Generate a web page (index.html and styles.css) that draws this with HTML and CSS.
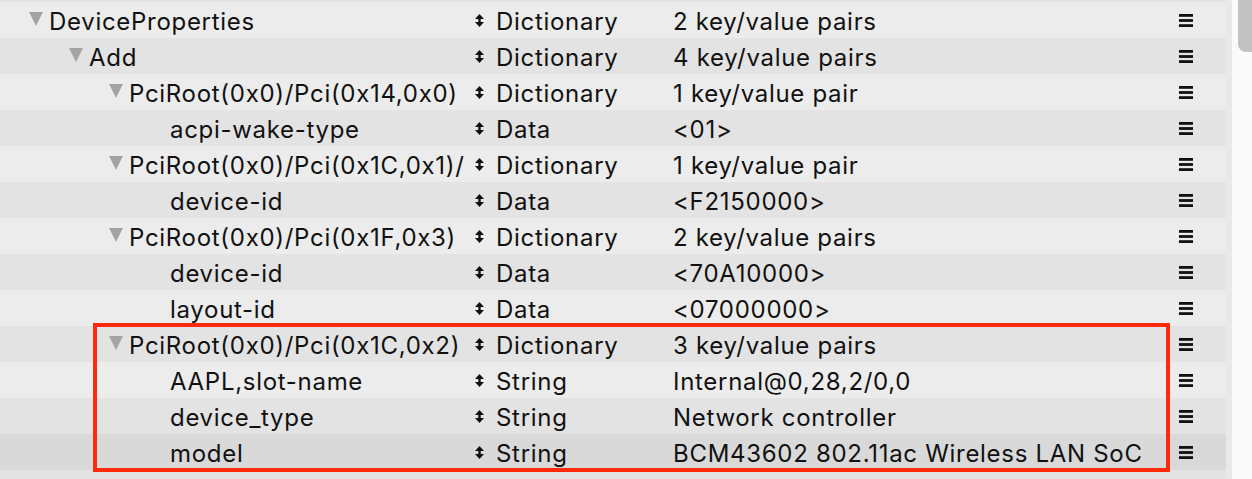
FILE: index.html
```html
<!DOCTYPE html>
<html lang="en">
<head>
<meta charset="utf-8">
<title>DeviceProperties</title>
<link rel="stylesheet" href="styles.css">
</head>
<body>
<div class="window">
  <div class="outline">
    <div class="rows">
      <div class="row dark"><div class="key l0"><span class="tri"></span><span class="txt">Booter</span></div><div class="type"><svg class="updown" viewBox="0 0 9 13"><path d="M4.5 0 L9 5 H5.7 V8 H9 L4.5 13 L0 8 H3.3 V5 H0 Z"/></svg><span>Dictionary</span></div><div class="value">3 key/value pairs</div><div class="menu"><svg class="burger" viewBox="0 0 14 13"><rect y="0" width="14" height="2.8"/><rect y="5.1" width="14" height="2.8"/><rect y="10.2" width="14" height="2.8"/></svg></div></div>

      <div class="row light"><div class="key l0"><span class="tri"></span><span class="txt">DeviceProperties</span></div><div class="type"><svg class="updown" viewBox="0 0 9 13"><path d="M4.5 0 L9 5 H5.7 V8 H9 L4.5 13 L0 8 H3.3 V5 H0 Z"/></svg><span>Dictionary</span></div><div class="value">2 key/value pairs</div><div class="menu"><svg class="burger" viewBox="0 0 14 13"><rect y="0" width="14" height="2.8"/><rect y="5.1" width="14" height="2.8"/><rect y="10.2" width="14" height="2.8"/></svg></div></div>

      <div class="row dark"><div class="key l1"><span class="tri"></span><span class="txt">Add</span></div><div class="type"><svg class="updown" viewBox="0 0 9 13"><path d="M4.5 0 L9 5 H5.7 V8 H9 L4.5 13 L0 8 H3.3 V5 H0 Z"/></svg><span>Dictionary</span></div><div class="value">4 key/value pairs</div><div class="menu"><svg class="burger" viewBox="0 0 14 13"><rect y="0" width="14" height="2.8"/><rect y="5.1" width="14" height="2.8"/><rect y="10.2" width="14" height="2.8"/></svg></div></div>

      <div class="row light"><div class="key l2"><span class="tri"></span><span class="txt">PciRoot(0x0)/Pci(0x14,0x0)</span></div><div class="type"><svg class="updown" viewBox="0 0 9 13"><path d="M4.5 0 L9 5 H5.7 V8 H9 L4.5 13 L0 8 H3.3 V5 H0 Z"/></svg><span>Dictionary</span></div><div class="value">1 key/value pair</div><div class="menu"><svg class="burger" viewBox="0 0 14 13"><rect y="0" width="14" height="2.8"/><rect y="5.1" width="14" height="2.8"/><rect y="10.2" width="14" height="2.8"/></svg></div></div>

      <div class="row dark"><div class="key l3"><span class="txt">acpi-wake-type</span></div><div class="type"><svg class="updown" viewBox="0 0 9 13"><path d="M4.5 0 L9 5 H5.7 V8 H9 L4.5 13 L0 8 H3.3 V5 H0 Z"/></svg><span>Data</span></div><div class="value">&lt;01&gt;</div><div class="menu"><svg class="burger" viewBox="0 0 14 13"><rect y="0" width="14" height="2.8"/><rect y="5.1" width="14" height="2.8"/><rect y="10.2" width="14" height="2.8"/></svg></div></div>

      <div class="row light"><div class="key l2"><span class="tri"></span><span class="txt">PciRoot(0x0)/Pci(0x1C,0x1)/Pci(0x0,0x0)</span></div><div class="type"><svg class="updown" viewBox="0 0 9 13"><path d="M4.5 0 L9 5 H5.7 V8 H9 L4.5 13 L0 8 H3.3 V5 H0 Z"/></svg><span>Dictionary</span></div><div class="value">1 key/value pair</div><div class="menu"><svg class="burger" viewBox="0 0 14 13"><rect y="0" width="14" height="2.8"/><rect y="5.1" width="14" height="2.8"/><rect y="10.2" width="14" height="2.8"/></svg></div></div>

      <div class="row dark"><div class="key l3"><span class="txt">device-id</span></div><div class="type"><svg class="updown" viewBox="0 0 9 13"><path d="M4.5 0 L9 5 H5.7 V8 H9 L4.5 13 L0 8 H3.3 V5 H0 Z"/></svg><span>Data</span></div><div class="value">&lt;F2150000&gt;</div><div class="menu"><svg class="burger" viewBox="0 0 14 13"><rect y="0" width="14" height="2.8"/><rect y="5.1" width="14" height="2.8"/><rect y="10.2" width="14" height="2.8"/></svg></div></div>

      <div class="row light"><div class="key l2"><span class="tri"></span><span class="txt">PciRoot(0x0)/Pci(0x1F,0x3)</span></div><div class="type"><svg class="updown" viewBox="0 0 9 13"><path d="M4.5 0 L9 5 H5.7 V8 H9 L4.5 13 L0 8 H3.3 V5 H0 Z"/></svg><span>Dictionary</span></div><div class="value">2 key/value pairs</div><div class="menu"><svg class="burger" viewBox="0 0 14 13"><rect y="0" width="14" height="2.8"/><rect y="5.1" width="14" height="2.8"/><rect y="10.2" width="14" height="2.8"/></svg></div></div>

      <div class="row dark"><div class="key l3"><span class="txt">device-id</span></div><div class="type"><svg class="updown" viewBox="0 0 9 13"><path d="M4.5 0 L9 5 H5.7 V8 H9 L4.5 13 L0 8 H3.3 V5 H0 Z"/></svg><span>Data</span></div><div class="value">&lt;70A10000&gt;</div><div class="menu"><svg class="burger" viewBox="0 0 14 13"><rect y="0" width="14" height="2.8"/><rect y="5.1" width="14" height="2.8"/><rect y="10.2" width="14" height="2.8"/></svg></div></div>

      <div class="row light"><div class="key l3"><span class="txt">layout-id</span></div><div class="type"><svg class="updown" viewBox="0 0 9 13"><path d="M4.5 0 L9 5 H5.7 V8 H9 L4.5 13 L0 8 H3.3 V5 H0 Z"/></svg><span>Data</span></div><div class="value">&lt;07000000&gt;</div><div class="menu"><svg class="burger" viewBox="0 0 14 13"><rect y="0" width="14" height="2.8"/><rect y="5.1" width="14" height="2.8"/><rect y="10.2" width="14" height="2.8"/></svg></div></div>

      <div class="group highlighted">
        <div class="row dark"><div class="key l2"><span class="tri"></span><span class="txt">PciRoot(0x0)/Pci(0x1C,0x2)</span></div><div class="type"><svg class="updown" viewBox="0 0 9 13"><path d="M4.5 0 L9 5 H5.7 V8 H9 L4.5 13 L0 8 H3.3 V5 H0 Z"/></svg><span>Dictionary</span></div><div class="value">3 key/value pairs</div><div class="menu"><svg class="burger" viewBox="0 0 14 13"><rect y="0" width="14" height="2.8"/><rect y="5.1" width="14" height="2.8"/><rect y="10.2" width="14" height="2.8"/></svg></div></div>

        <div class="row light"><div class="key l3"><span class="txt">AAPL,slot-name</span></div><div class="type"><svg class="updown" viewBox="0 0 9 13"><path d="M4.5 0 L9 5 H5.7 V8 H9 L4.5 13 L0 8 H3.3 V5 H0 Z"/></svg><span>String</span></div><div class="value">Internal@0,28,2/0,0</div><div class="menu"><svg class="burger" viewBox="0 0 14 13"><rect y="0" width="14" height="2.8"/><rect y="5.1" width="14" height="2.8"/><rect y="10.2" width="14" height="2.8"/></svg></div></div>

        <div class="row dark"><div class="key l3"><span class="txt">device_type</span></div><div class="type"><svg class="updown" viewBox="0 0 9 13"><path d="M4.5 0 L9 5 H5.7 V8 H9 L4.5 13 L0 8 H3.3 V5 H0 Z"/></svg><span>String</span></div><div class="value">Network controller</div><div class="menu"><svg class="burger" viewBox="0 0 14 13"><rect y="0" width="14" height="2.8"/><rect y="5.1" width="14" height="2.8"/><rect y="10.2" width="14" height="2.8"/></svg></div></div>

        <div class="row selected"><div class="key l3"><span class="txt">model</span></div><div class="type"><svg class="updown" viewBox="0 0 9 13"><path d="M4.5 0 L9 5 H5.7 V8 H9 L4.5 13 L0 8 H3.3 V5 H0 Z"/></svg><span>String</span></div><div class="value">BCM43602 802.11ac Wireless LAN SoC</div><div class="menu"><svg class="burger" viewBox="0 0 14 13"><rect y="0" width="14" height="2.8"/><rect y="5.1" width="14" height="2.8"/><rect y="10.2" width="14" height="2.8"/></svg></div></div>
      </div>

      <div class="row dark"><div class="key l1"><span class="tri"></span><span class="txt">Delete</span></div><div class="type"><svg class="updown" viewBox="0 0 9 13"><path d="M4.5 0 L9 5 H5.7 V8 H9 L4.5 13 L0 8 H3.3 V5 H0 Z"/></svg><span>Dictionary</span></div><div class="value">0 key/value pairs</div><div class="menu"><svg class="burger" viewBox="0 0 14 13"><rect y="0" width="14" height="2.8"/><rect y="5.1" width="14" height="2.8"/><rect y="10.2" width="14" height="2.8"/></svg></div></div>
    </div>
  </div>
  <div class="divider"></div>
  <div class="scrollbar"><div class="thumb"></div></div>
</div>
</body>
</html>
```

FILE: styles.css
```css
*, *::before, *::after { box-sizing: border-box; }
html, body {
  margin: 0;
  padding: 0;
  width: 1252px;
  height: 479px;
  overflow: hidden;
  background: #fafafa;
}
.window {
  display: flex;
  width: 1252px;
  height: 479px;
  overflow: hidden;
  font-family: "Inter", "Liberation Sans", sans-serif;
  font-size: 24px;
  letter-spacing: 0.7px;
  color: #111;
}
.outline {
  width: 1226px;
  flex: none;
  overflow: hidden;
}
.rows {
  margin-top: -34px;
}
.row {
  display: flex;
  align-items: center;
  height: 36px;
  padding-top: 3px;
  white-space: nowrap;
}
.light { background: #ececec; }
.dark { background: #e3e3e3; }
.selected { background: #d9d9d9; }

.key {
  width: 465px;
  flex: none;
  display: flex;
  align-items: center;
  overflow: hidden;
}
.key.l0 { padding-left: 29px; }
.key.l1 { padding-left: 69px; }
.key.l2 { padding-left: 109px; }
.key.l3 { padding-left: 170px; }
.tri {
  flex: none;
  width: 0;
  height: 0;
  border-left: 7.5px solid transparent;
  border-right: 7.5px solid transparent;
  border-top: 14px solid #a3a3a3;
  margin-right: 6px;
  margin-top: -6px;
}
.txt { flex: none; }

.type {
  width: 208px;
  flex: none;
  display: flex;
  align-items: center;
  padding-left: 10px;
}
.updown {
  width: 9px;
  height: 13px;
  fill: #111;
  margin-right: 12px;
  margin-top: -2px;
  flex: none;
}
.value {
  width: 492px;
  flex: none;
  overflow: hidden;
}
.menu {
  flex: 1;
  display: flex;
  align-items: center;
  padding-left: 14px;
}
.burger {
  width: 14px;
  height: 13px;
  fill: #111;
  margin-top: -3px;
}

.group { position: relative; }
.group.highlighted::after {
  content: "";
  position: absolute;
  left: 93px;
  top: -3px;
  width: 1077px;
  bottom: -2px;
  border: 4.5px solid #ff2a0a;
  pointer-events: none;
}

.divider {
  width: 6px;
  flex: none;
  background: #e9e9e9;
}
.scrollbar {
  flex: 1;
  background: #fafafa;
  position: relative;
}
.thumb {
  position: absolute;
  left: 6px;
  top: -10px;
  width: 22px;
  height: 62px;
  border-radius: 8px;
  background: #c2c2c2;
}
```
